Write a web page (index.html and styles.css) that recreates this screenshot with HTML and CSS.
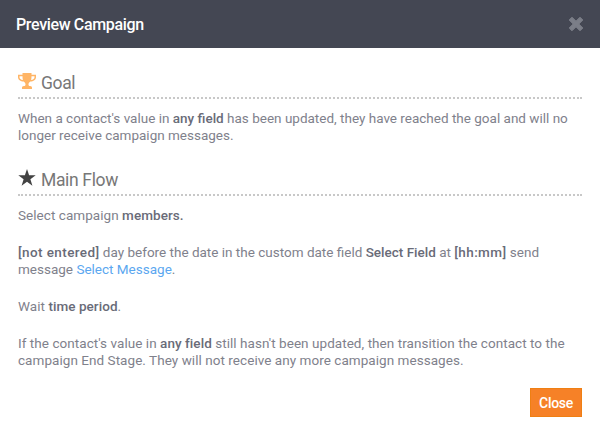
FILE: index.html
```html
<!DOCTYPE html>
<html lang="en">
<head>
    <meta charset="UTF-8">
    <meta name="viewport" content="width=device-width, initial-scale=1.0">
    <title>Preview Campaign</title>
    <link rel="stylesheet" href="styles.css">
</head>
<body>
    <div class="modal">
        <header class="modal-header">
            <h1>Preview Campaign</h1>
            <button type="button" class="dismiss" aria-label="Dismiss">
                <svg width="16" height="16" viewBox="0 0 16 16"><path d="M4 1.2 8 5.2l4-4L14.8 4l-4 4 4 4-2.8 2.8-4-4-4 4L1.2 12l4-4-4-4z" fill="#7b7e88" stroke="#7b7e88" stroke-width="1" stroke-linejoin="round"/></svg>
            </button>
        </header>

        <main class="modal-body">
            <section class="goal">
                <h2>
                    <svg class="icon" width="18" height="16" viewBox="0 0 18 16">
                        <path d="M4.500 0h9v1.700H18v2.500C18 6.600 15.400 8.400 12.400 8.600c-.8.9-1.700 1.300-1.900 2.300-.2 1.200.4 2 1.600 2.100 1.300.1 1.900.8 1.900 1.800V16H4v-1.200c0-1 .6-1.700 1.900-1.800 1.200-.1 1.800-.9 1.600-2.100-.2-1-1.100-1.400-1.900-2.300C2.600 8.400 0 6.600 0 4.200V1.700h4.500zM4.500 3.300H1.500v.9c0 1.300 1.300 2.400 3.400 2.800-.3-1-.4-2.200-.4-3.700zm9 0c0 1.500-.1 2.700-.4 3.700 2.100-.4 3.400-1.500 3.400-2.800v-.9z" fill="#ffb566" fill-rule="evenodd"/>
                    </svg>
                    <span>Goal</span>
                </h2>
                <p>When a contact's value in <b>any field</b> has been updated, they have reached the goal and will no<br>longer receive campaign messages.</p>
            </section>

            <section>
                <h2>
                    <svg class="icon star" width="18" height="17" viewBox="0 0 18 17">
                        <path d="M9 0l2.100 6.300h6.600l-5.300 4 2 6.400L9 12.800l-5.400 3.900 2-6.400-5.300-4h6.600z" fill="#434343"/>
                    </svg>
                    <span>Main Flow</span>
                </h2>
                <p>Select campaign <b>members.</b></p>
                <p class="send"><b class="slot">[not entered]</b> day before the date in the custom date field <b>Select Field</b> at <b class="slot">[hh:mm]</b> send<br>message <a href="#">Select Message</a>.</p>
                <p>Wait <b>time period</b>.</p>
                <p>If the contact's value in <b>any field</b> still hasn't been updated, then transition the contact to the<br>campaign End Stage. They will not receive any more campaign messages.</p>
            </section>
        </main>

        <footer class="modal-footer">
            <button type="button" class="close">Close</button>
        </footer>
    </div>
</body>
</html>
```
FILE: styles.css
```css
* {
    box-sizing: border-box;
}

body {
    font-family: Roboto, "Liberation Sans", sans-serif;
    font-size: 13.5px;
    line-height: 17px;
    letter-spacing: 0.05px;
    color: #7f818c;
    background-color: #fff;
    margin: 0;
}

.modal {
    height: 435px;
}

.modal-header {
    display: flex;
    justify-content: space-between;
    align-items: center;
    height: 48px;
    padding: 0 16px;
    background-color: #444753;
}

h1 {
    margin: 0;
    font-size: 16px;
    font-weight: 500;
    letter-spacing: -0.35px;
    color: #fff;
}

.dismiss {
    display: flex;
    padding: 0;
    border: none;
    background: none;
    cursor: pointer;
}

.modal-body {
    padding: 20px 18px 0;
}

section {
    margin-bottom: 21px;
}

section:last-child {
    margin-bottom: 19px;
}

h2 {
    display: flex;
    align-items: center;
    gap: 5px;
    height: 31px;
    margin: 0 0 11px;
    border-bottom: 2px dotted #c8c8c8;
    font-size: 17.5px;
    font-weight: 400;
    letter-spacing: -0.35px;
    color: #777;
}

h2 span {
    padding-top: 2px;
}

.icon {
    margin-bottom: 3px;
}

.star {
    margin-bottom: 4px;
}

p {
    margin: 0 0 20px;
    white-space: nowrap;
}

section p:last-child {
    margin-bottom: 0;
}

.goal p {
    letter-spacing: 0;
}

.send {
    letter-spacing: 0;
}

b {
    font-weight: 500;
    color: #696b78;
}

.slot {
    letter-spacing: 0.4px;
}

a {
    color: #5ba7f0;
    text-decoration: none;
}

.modal-footer {
    display: flex;
    justify-content: flex-end;
    padding: 0 18px;
}

.close {
    width: 52px;
    height: 29px;
    padding: 0;
    border: 1px solid #ef7f13;
    background-color: #f68127;
    color: #fff;
    font: 500 14px Roboto, sans-serif;
    letter-spacing: -0.3px;
    cursor: pointer;
}
```
